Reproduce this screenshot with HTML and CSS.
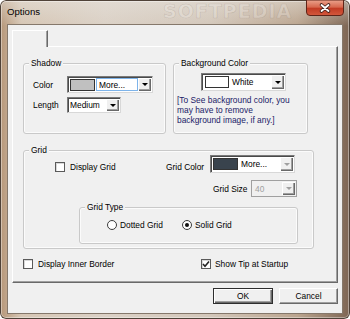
FILE: index.html
```html
<!DOCTYPE html>
<html lang="en">

<head>
    <meta charset="UTF-8">
    <meta name="viewport" content="width=device-width, initial-scale=1.0">
    <title>Options</title>
    <link rel="stylesheet" href="styles.css">
</head>

<body>
    <div class="window">
        <div class="titlebar">
            <div class="caption">Options</div>
        </div>
        <div class="client">
            <div class="tab"></div>
            <div class="panel">
                <div class="top-row">
                    <div class="group shadow">
                        <div class="group-title">Shadow</div>
                        <div class="field first">
                            <span class="field-label">Color</span>
                            <div class="combo color-combo">
                                <span class="swatch gray"></span>
                                <span class="more">More...</span>
                                <span class="drop"></span>
                            </div>
                        </div>
                        <div class="field">
                            <span class="field-label">Length</span>
                            <div class="combo length-combo">
                                <span class="value">Medium</span>
                                <span class="drop"></span>
                            </div>
                        </div>
                    </div>
                    <div class="group background">
                        <div class="group-title">Background Color</div>
                        <div class="combo bg-combo">
                            <span class="swatch white"></span>
                            <span class="value">White</span>
                            <span class="drop"></span>
                        </div>
                        <p class="note">[To See background color, you<br>may have to remove<br>background image, if any.]</p>
                    </div>
                </div>

                <div class="group grid">
                    <div class="group-title">Grid</div>
                    <div class="grid-row">
                        <label class="check-item display-grid"><span class="checkbox"></span>Display Grid</label>
                        <span class="row-label grid-color-label">Grid Color</span>
                        <div class="combo grid-color-combo">
                            <span class="swatch dark"></span>
                            <span class="value">More...</span>
                            <span class="drop disabled"></span>
                        </div>
                    </div>
                    <div class="size-row">
                        <span class="row-label size-label">Grid Size</span>
                        <div class="combo size-combo">
                            <span class="value">40</span>
                            <span class="drop disabled"></span>
                        </div>
                    </div>
                    <div class="group grid-type">
                        <div class="group-title">Grid Type</div>
                        <div class="radios">
                            <label class="radio-item dotted"><span class="radio"></span>Dotted Grid</label>
                            <label class="radio-item"><span class="radio checked"></span>Solid Grid</label>
                        </div>
                    </div>
                </div>

                <div class="check-row">
                    <label class="check-item inner-border"><span class="checkbox"></span>Display Inner Border</label>
                    <label class="check-item tip">
                        <span class="checkbox">
                            <svg width="8" height="8" viewBox="0 0 8 8">
                                <path d="M1 4 L3 6.2 L7 1.5" fill="none" stroke="#222" stroke-width="1.6" />
                            </svg>
                        </span>Show Tip at Startup
                    </label>
                </div>
            </div>
            <div class="buttons">
                <div class="btn default">OK</div>
                <div class="btn">Cancel</div>
            </div>
        </div>

        <!-- softpedia watermark -->
        <div class="mark">SOFTPEDIA</div>

        <!-- caption close button sits on the frame -->
        <div class="close-btn">
            <svg class="close-x" width="38" height="16" viewBox="0 0 38 16">
                <defs>
                    <linearGradient id="red" x1="0" y1="0" x2="0" y2="1">
                        <stop offset="0" stop-color="#eba38d" />
                        <stop offset=".45" stop-color="#d7694f" />
                        <stop offset=".55" stop-color="#c23c24" />
                        <stop offset="1" stop-color="#d3593d" />
                    </linearGradient>
                </defs>
                <path d="M0.5 0 V12 Q0.5 15.5 4 15.5 H34 Q37.5 15.5 37.5 12 V0 Z" fill="url(#red)" stroke="#5e2418" />
                <path d="M15.5 5 L22.5 11 M22.5 5 L15.5 11" stroke="#3d1f1a" stroke-width="3.6" stroke-linecap="round" />
                <path d="M15.5 5 L22.5 11 M22.5 5 L15.5 11" stroke="#fff" stroke-width="1.9" stroke-linecap="round" />
            </svg>
        </div>
    </div>
</body>

</html>
```

FILE: styles.css
```css
* {
    padding: 0;
    margin: 0;
    box-sizing: border-box;
}

body {
    width: 350px;
    height: 319px;
    overflow: hidden;
    background-color: #fff;
    font-family: "Liberation Sans", Arial, sans-serif;
    font-size: 8.4px;
    color: #000;
}

.window {
    position: relative;
    width: 350px;
    height: 319px;
    padding: 0 7px 5px;
    border-radius: 6px;
    background-color: #d6ccc1;
    background-image:
        linear-gradient(rgba(230, 226, 220, .55), rgba(230, 226, 220, 0) 26px),
        linear-gradient(90deg, #b59577 0%, #d6c6b4 6%, #dbd1c6 30%, #d3c7ba 60%, #bba58f 85%, #7d6553 100%);
    box-shadow: inset 0 0 0 1px #4f4238, inset 0 0 0 2px rgba(255, 255, 255, .4);
}

.titlebar {
    height: 24px;
}

.caption {
    font-size: 9.6px;
    line-height: 24px;
}

.close-btn {
    position: absolute;
    top: 0;
    right: 6px;
    width: 38px;
    height: 16px;
}

.close-x {
    display: block;
}

.client {
    height: 290px;
    padding: 5px 4px 0;
    border: 1px solid #85786b;
    background-color: #f0f0f0;
}

.tab {
    position: relative;
    z-index: 1;
    width: 36px;
    height: 17px;
    margin-bottom: -1px;
    border-top: 1px solid #fff;
    border-left: 1px solid #fff;
    border-right: 1px solid #696969;
    background-color: #f0f0f0;
    box-shadow: inset -1px 0 #a0a0a0;
}

.panel {
    height: 237px;
    padding: 16px 0 0 10px;
    border: 1px solid;
    border-color: #fff #696969 #696969 #fff;
    box-shadow: inset -1px -1px #a0a0a0;
}

.top-row {
    display: flex;
    gap: 7px;
}

.group {
    border: 1px solid #c9c9c9;
    border-radius: 3px;
    box-shadow: inset 0 0 0 1px #fbfbfb;
}

.group-title {
    width: max-content;
    margin: -6px 0 0 5px;
    padding: 0 2px;
    line-height: 10px;
    background-color: #f0f0f0;
}

.shadow {
    width: 143px;
    height: 71px;
}

.background {
    width: 135px;
    height: 71px;
}

.field {
    display: flex;
    align-items: center;
    margin-top: 4px;
    padding-left: 9px;
}

.field.first {
    margin-top: 8px;
}

.field-label {
    width: 34px;
}

/* combo boxes */
.combo {
    display: flex;
    align-items: center;
    border: 1px solid;
    border-color: #7a7a7a #d8d8d8 #d8d8d8 #7a7a7a;
    background-color: #fff;
    box-shadow: inset 1px 1px #4a4a4a;
}

.combo .value {
    flex: 1;
    padding-left: 3px;
    white-space: nowrap;
}

.drop {
    display: flex;
    align-items: center;
    justify-content: center;
    align-self: stretch;
    width: 13px;
    margin: 1px 1px 1px 0;
    background-color: #f0f0f0;
    box-shadow: inset 1px 1px #fff, inset -1px -1px #696969, inset -2px -2px #a0a0a0;
}

.drop::after {
    content: "";
    border-top: 3px solid #000;
    border-left: 3px solid transparent;
    border-right: 3px solid transparent;
}

.drop.disabled::after {
    border-top-color: #a0a0a0;
}

.swatch {
    height: 12px;
    margin-left: 2px;
    border: 1px solid #333;
}

.swatch.gray {
    width: 25px;
    background-color: #c0c0c0;
}

.swatch.white {
    width: 24px;
    margin-left: 3px;
    background-color: #fff;
}

.swatch.dark {
    width: 25px;
    background-color: #39434d;
}

.color-combo {
    width: 86px;
    height: 17px;
}

.more {
    flex: 1;
    align-self: stretch;
    margin: 1px 0 1px 1px;
    padding-left: 2px;
    line-height: 13px;
    border: 1px solid #7eb4ea;
}

.length-combo {
    width: 54px;
    height: 16px;
}

.length-combo .value {
    padding-left: 2px;
}

.bg-combo {
    width: 85px;
    height: 18px;
    margin: 5px 0 0 27px;
}

.note {
    margin-top: 4px;
    padding-left: 3px;
    line-height: 10px;
    white-space: nowrap;
    color: #1b1b68;
}

/* grid group */
.grid {
    width: 291px;
    height: 99px;
    margin-top: 16px;
}

.grid-row {
    display: flex;
    align-items: flex-end;
}

.row-label {
    line-height: 12px;
}

.check-item,
.radio-item {
    display: flex;
    align-items: center;
    line-height: 10px;
    white-space: nowrap;
}

.checkbox {
    display: flex;
    align-items: center;
    justify-content: center;
    width: 10px;
    height: 10px;
    margin-right: 5px;
    border: 1px solid #5a5a5a;
    background-color: #fff;
    box-shadow: inset 1px 1px #d8d8d8;
}

.display-grid {
    width: 111px;
    margin: 0 0 1px 31px;
}

.grid-color-label {
    width: 44px;
}

.grid-color-combo {
    width: 85px;
    height: 18px;
}

.size-row {
    display: flex;
    align-items: center;
    margin: 7px 0 0 189px;
}

.size-label {
    width: 38px;
}

.size-combo {
    width: 46px;
    height: 17px;
    border-color: #a0a0a0;
    background-color: #f0f0f0;
    box-shadow: none;
    color: #a0a0a0;
}

.grid-type {
    width: 219px;
    height: 37px;
    margin: 10px 0 0 55px;
}

.radios {
    display: flex;
    margin-top: 8px;
    padding-left: 27px;
}

.dotted {
    width: 75px;
}

.radio {
    display: flex;
    align-items: center;
    justify-content: center;
    width: 10px;
    height: 10px;
    margin-right: 3px;
    border: 1px solid #3c3c3c;
    border-radius: 50%;
    background-color: #fff;
}

.radio.checked::after {
    content: "";
    width: 4px;
    height: 4px;
    border-radius: 50%;
    background-color: #111;
}

.check-row {
    display: flex;
    margin-top: 10px;
}

.inner-border {
    width: 178px;
}

.tip .checkbox {
    margin-right: 4px;
}

/* buttons */
.buttons {
    display: flex;
    justify-content: flex-end;
    gap: 6px;
    margin-top: 5px;
}

.btn {
    width: 59px;
    height: 16px;
    line-height: 14px;
    text-align: center;
    border: 1px solid;
    border-color: #fff #696969 #696969 #fff;
    background-color: #f0f0f0;
    box-shadow: inset -1px -1px #a0a0a0;
}

.btn.default {
    width: 60px;
    border-color: #2e2e2e;
    box-shadow: inset 1px 1px #fff, inset -1px -1px #696969, inset -2px -2px #a0a0a0;
}

/* watermark over the title bar */
.mark {
    position: absolute;
    left: 163px;
    top: 0;
    font-family: "DejaVu Sans", sans-serif;
    font-size: 19px;
    font-weight: bold;
    letter-spacing: 1px;
    white-space: nowrap;
    color: rgba(255, 255, 255, .2);
    -webkit-text-stroke: .6px rgba(90, 75, 60, .2);
    pointer-events: none;
}
```
